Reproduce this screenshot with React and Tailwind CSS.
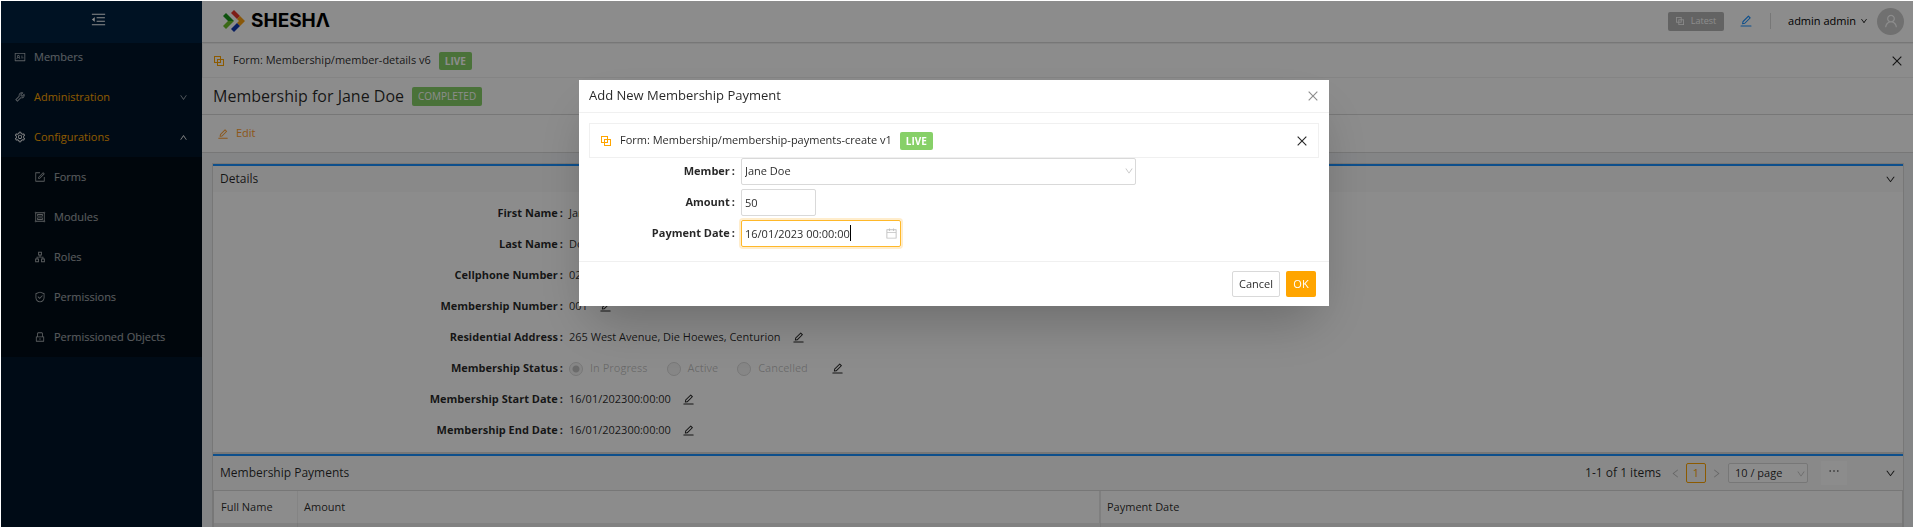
import React from 'react';
import {
  AiOutlineMenuFold, AiOutlineIdcard, AiOutlineTool, AiOutlineSetting, AiOutlineForm,
  AiOutlineGroup, AiOutlineApartment, AiOutlineSafety, AiOutlineLock,
  AiOutlineEdit, AiOutlineDown, AiOutlineUp, AiOutlineLeft, AiOutlineRight,
  AiOutlineClose, AiOutlineUser, AiOutlineCalendar, AiOutlineEllipsis,
} from 'react-icons/ai';

const subItems = [
  { label: 'Forms', Icon: AiOutlineForm },
  { label: 'Modules', Icon: AiOutlineGroup },
  { label: 'Roles', Icon: AiOutlineApartment },
  { label: 'Permissions', Icon: AiOutlineSafety },
  { label: 'Permissioned Objects', Icon: AiOutlineLock },
];

function Sidebar() {
  return (
    <nav className="flex w-[202px] shrink-0 flex-col bg-[#001529] text-white/65">
      <button aria-label="Collapse menu" className="flex h-[43px] shrink-0 items-center justify-center bg-[#002140] pb-1 pr-[6px] text-white">
        <AiOutlineMenuFold size={17} />
      </button>
      <a href="#members" className="flex h-[34px] items-center gap-2 pb-[6px] pl-[14px]">
        <AiOutlineIdcard size={12} />Members
      </a>
      <a href="#administration" className="flex h-10 items-center gap-2 px-[14px]">
        <AiOutlineTool size={12} />
        <span className="flex-1 text-[#ffa500]">Administration</span>
        <AiOutlineDown size={9} />
      </a>
      <a href="#configurations" className="flex h-10 items-center gap-2 px-[14px]">
        <AiOutlineSetting size={12} className="text-white" />
        <span className="flex-1 text-[#ffa500]">Configurations</span>
        <AiOutlineUp size={9} className="text-white" />
      </a>
      <ul className="bg-[#000c17]">
        {subItems.map(({ label, Icon }) => (
          <li key={label}>
            <a href="#item" className="flex h-10 items-center gap-2 pl-[34px]"><Icon size={12} />{label}</a>
          </li>
        ))}
      </ul>
    </nav>
  );
}

function Logo() {
  return (
    <a href="#home" aria-label="Shesha" className="flex items-center gap-[6px]">
      <svg width="22" height="22" viewBox="0 0 22 22">
        <path d="M0 6l3-3 8 8H5z" fill="#1b951b" />
        <path d="M5 11h6l-8 8-3-3z" fill="#6cc02a" />
        <path d="M8 3l3-3 6 6-3 3z" fill="#e5382c" />
        <path d="M14 9l3-3 5 5-5 5-3-3 2-2z" fill="#f9a013" />
        <path d="M8 19l6-6 3 3-6 6z" fill="#1238b0" />
      </svg>
      <span className="font-[Inter] text-[19px] font-bold leading-[22px] text-black">SHESHΛ</span>
    </a>
  );
}

function BlockIcon({ className }) {
  return (
    <svg width="10" height="10" viewBox="0 0 10 10" fill="none" stroke="currentColor" className={className}>
      <rect x="0.5" y="0.5" width="6" height="6" />
      <rect x="3.5" y="3.5" width="6" height="6" />
    </svg>
  );
}

function FormBar({ name }) {
  return (
    <div className="flex h-[35px] items-center border border-[#f0f0f0] pl-[11px] pr-[9px]">
      <BlockIcon className="text-[#ffa500]" />
      <span className="ml-[9px]">{name}</span>
      <span className="ml-2 rounded-[2px] bg-[#87d068] px-[6px] text-[10px] font-bold leading-[18px] text-white">LIVE</span>
      <button aria-label="Close form info" className="ml-auto"><AiOutlineClose size={14} /></button>
    </div>
  );
}

function TopBar() {
  return (
    <header className="flex h-[43px] items-center border-b border-[#d9d9d9] bg-white pl-[21px] pr-[10px]">
      <Logo />
      <div className="ml-auto flex items-center">
        <span className="flex h-[19px] w-14 items-center justify-center gap-[7px] rounded-[2px] bg-[#b4b4b4] text-[9px] text-white">
          <BlockIcon className="size-2" />Latest
        </span>
        <button aria-label="Edit mode" className="ml-[15px] text-[#1890ff]"><AiOutlineEdit size={14} /></button>
        <span className="ml-[17px] h-4 w-px bg-[#d9d9d9]" />
        <button className="ml-[17px] flex items-center gap-1 text-black">admin admin<AiOutlineDown size={8} /></button>
        <span className="ml-[9px] flex size-[27px] items-center justify-center rounded-full bg-[#ccc] text-white"><AiOutlineUser size={16} /></span>
      </div>
    </header>
  );
}

const details = [
  ['First Name', 'Jane'],
  ['Last Name', 'Doe'],
  ['Cellphone Number', '0215554321'],
  ['Membership Number', '001'],
  ['Residential Address', '265 West Avenue, Die Hoewes, Centurion'],
  ['Membership Status', null],
  ['Membership Start Date', '16/01/202300:00:00'],
  ['Membership End Date', '16/01/202300:00:00'],
];

function StatusOptions() {
  return (
    <span className="mr-3 flex items-center gap-[19px] text-black/25">
      {['In Progress', 'Active', 'Cancelled'].map((s, i) => (
        <label key={s} className="flex items-center gap-[7px]">
          <input
            type="radio" name="status" disabled defaultChecked={i === 0}
            className="size-[14px] appearance-none rounded-full border border-[#d9d9d9] bg-[#f5f5f5] checked:bg-[radial-gradient(circle,#c4c4c4_0_3px,#f5f5f5_4px)]"
          />
          {s}
        </label>
      ))}
    </span>
  );
}

function Details() {
  return (
    <section className="border border-[#d9d9d9] bg-white">
      <h2 className="flex h-7 items-center justify-between border-t-2 border-[#1890ff] bg-[#fafafa] px-[7px] text-xs">
        Details<AiOutlineDown size={11} />
      </h2>
      <dl className="py-[6px]">
        {details.map(([label, value]) => (
          <div key={label} className="flex h-[31px] items-center">
            <dt className="flex w-[350px] justify-end gap-[2px] font-bold">{label}<span>:</span></dt>
            <dd className="ml-[6px] flex items-center gap-[11px]">
              {value ?? <StatusOptions />}
              <button aria-label={`Edit ${label}`}><AiOutlineEdit size={13} /></button>
            </dd>
          </div>
        ))}
      </dl>
    </section>
  );
}

function Payments() {
  return (
    <section className="border border-[#d9d9d9] bg-white">
      <div className="flex h-[37px] items-center border-b border-t-2 border-b-[#d9d9d9] border-t-[#1890ff] bg-[#fafafa] px-[7px]">
        <h2 className="flex-1 text-xs">Membership Payments</h2>
        <span className="text-xs">1-1 of 1 items</span>
        <button aria-label="Previous page" className="ml-[9px] text-black/25"><AiOutlineLeft size={11} /></button>
        <button className="mx-[5px] size-5 rounded-[2px] border border-[#ffa500] text-[#ffa500]">1</button>
        <button aria-label="Next page" className="text-black/25"><AiOutlineRight size={11} /></button>
        <span className="relative ml-[6px]">
          <select aria-label="Page size" className="h-5 w-20 appearance-none rounded-[2px] border border-[#d9d9d9] bg-white pl-[6px]"><option>10 / page</option></select>
          <AiOutlineDown size={10} className="absolute right-[2px] top-[6px] text-black/25" />
        </span>
        <button aria-label="More" className="ml-[13px] flex h-6 w-[26px] items-center justify-center bg-white pb-1"><AiOutlineEllipsis size={14} /></button>
        <AiOutlineDown size={11} className="ml-[38px]" />
      </div>
      <table className="w-full table-fixed border-x border-[#d9d9d9] text-left">
        <thead>
          <tr className="h-8">
            <th className="w-[84px] border-r border-[#f0f0f0] px-[7px] font-normal">Full Name</th>
            <th className="border-r-2 border-[#e8e8e8] px-[6px] font-normal">Amount</th>
            <th className="px-[6px] font-normal">Payment Date</th>
          </tr>
        </thead>
        <tbody>
          <tr className="h-10 bg-[#ebebeb]">
            <td className="border-r border-[#dedede]" /><td className="border-r border-[#dedede]" /><td />
          </tr>
        </tbody>
      </table>
    </section>
  );
}

function Field({ id, label, children }) {
  return (
    <div className="flex items-center">
      <label htmlFor={id} className="flex w-[146px] justify-end gap-[2px] font-bold">{label}<span>:</span></label>
      <div className="relative ml-[6px] flex">{children}</div>
    </div>
  );
}

function PaymentModal() {
  return (
    <div role="dialog" aria-label="Add New Membership Payment" className="w-[750px] bg-white shadow-2xl">
      <header className="flex h-[33px] items-center justify-between border-b border-[#f0f0f0] pl-[10px] pr-[9px]">
        <h1 className="text-[13px]">Add New Membership Payment</h1>
        <button aria-label="Close" className="text-black/45"><AiOutlineClose size={14} /></button>
      </header>
      <div className="px-[10px] pb-[14px] pt-[10px]">
        <FormBar name="Form: Membership/membership-payments-create v1" />
        <div className="flex flex-col gap-1">
          <Field id="member" label="Member">
            <select id="member" className="h-[27px] w-[395px] appearance-none rounded-[2px] border border-[#d9d9d9] pl-[3px]"><option>Jane Doe</option></select>
            <AiOutlineDown size={10} className="absolute right-[2px] top-2 text-black/25" />
          </Field>
          <Field id="amount" label="Amount">
            <input id="amount" defaultValue="50" className="h-[27px] w-[75px] rounded-[2px] border border-[#d9d9d9] pl-[3px]" />
          </Field>
          <Field id="date" label="Payment Date">
            <input id="date" defaultValue="16/01/2023 00:00:00" className="h-[27px] w-[160px] rounded-[2px] border border-[#ffb829] pl-[3px] shadow-[0_0_0_2px_rgba(255,165,0,0.2)]" />
            <span className="absolute left-[109px] top-[5px] h-4 w-px bg-black" />
            <AiOutlineCalendar size={13} className="absolute right-[3px] top-[7px] text-black/25" />
          </Field>
        </div>
      </div>
      <footer className="flex h-[45px] items-center justify-end gap-[6px] border-t border-[#f0f0f0] px-[13px]">
        <button className="h-[26px] w-12 rounded-[2px] border border-[#d9d9d9]">Cancel</button>
        <button className="h-[26px] w-[30px] rounded-[2px] bg-[#ffa500] text-white">OK</button>
      </footer>
    </div>
  );
}

export default function App() {
  return (
    <div className="flex h-screen overflow-hidden font-['Open_Sans',sans-serif] text-[11px] text-black/85">
      <Sidebar />
      <div className="min-w-0 flex-1 bg-[#f0f2f5]">
        <TopBar />
        <div className="bg-white">
          <FormBar name="Form: Membership/member-details v6" />
          <div className="flex h-[37px] items-center gap-2 border-b border-[#d9d9d9] px-[11px]">
            <h1 className="text-base">Membership for Jane Doe</h1>
            <span className="rounded-[2px] bg-[#87d068] px-[6px] text-[10px] leading-[19px] text-white">COMPLETED</span>
          </div>
          <div className="flex h-[38px] items-center border-b border-[#d9d9d9] px-[15px]">
            <button className="flex items-center gap-[7px] text-[#ff9d2e]"><AiOutlineEdit size={12} />Edit</button>
          </div>
        </div>
        <main className="p-[10px]"><Details /><Payments /></main>
      </div>
      <div className="fixed inset-0 flex items-start justify-center border border-white bg-black/45 pr-[6px] pt-[79px]">
        <PaymentModal />
      </div>
    </div>
  );
}
